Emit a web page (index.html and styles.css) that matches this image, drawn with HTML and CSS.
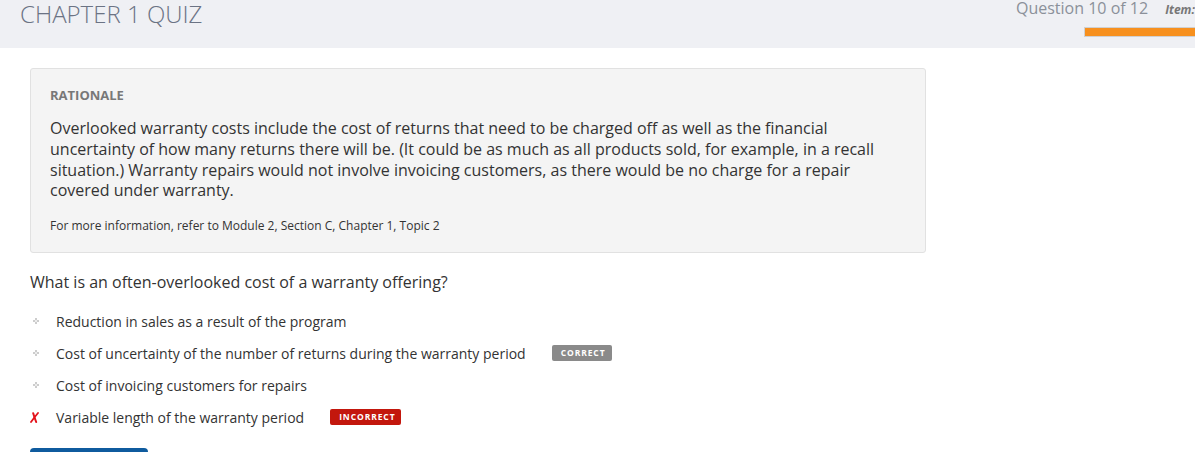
FILE: index.html
```html
<!DOCTYPE html>
<html>
<head>
<meta charset="utf-8">
<link rel="stylesheet" href="styles.css">
</head>
<body>
<header class="topbar">
  <h1 class="title">CHAPTER 1 QUIZ</h1>
  <div class="progress">
    <div class="progress-text"><span class="qnum">Question 10 of 12</span><span class="item">Item: 10</span></div>
    <div class="progress-bar"><div class="progress-fill"></div></div>
  </div>
</header>
<main class="content">
  <section class="rationale">
    <div class="rationale-label">RATIONALE</div>
    <p class="rationale-text">Overlooked warranty costs include the cost of returns that need to be charged off as well as the financial uncertainty of how many returns there will be. (It could be as much as all products sold, for example, in a recall situation.) Warranty repairs would not involve invoicing customers, as there would be no charge for a repair covered under warranty.</p>
    <p class="rationale-ref">For more information, refer to Module 2, Section C, Chapter 1, Topic 2</p>
  </section>
  <h2 class="question">What is an often-overlooked cost of a warranty offering?</h2>
  <ul class="options">
    <li class="option">
      <span class="marker"><svg width="6" height="6" viewBox="0 0 6 6"><path d="M2 0 H4 V2 H6 V4 H4 V6 H2 V4 H0 V2 H2 Z" fill="#cdcdcd"/><rect x="2" y="2" width="2" height="2" fill="#ececec"/></svg></span>
      <span class="option-text">Reduction in sales as a result of the program</span>
    </li>
    <li class="option">
      <span class="marker"><svg width="6" height="6" viewBox="0 0 6 6"><path d="M2 0 H4 V2 H6 V4 H4 V6 H2 V4 H0 V2 H2 Z" fill="#cdcdcd"/><rect x="2" y="2" width="2" height="2" fill="#ececec"/></svg></span>
      <span class="option-text">Cost of uncertainty of the number of returns during the warranty period</span>
      <span class="badge badge-correct">CORRECT</span>
    </li>
    <li class="option">
      <span class="marker"><svg width="6" height="6" viewBox="0 0 6 6"><path d="M2 0 H4 V2 H6 V4 H4 V6 H2 V4 H0 V2 H2 Z" fill="#cdcdcd"/><rect x="2" y="2" width="2" height="2" fill="#ececec"/></svg></span>
      <span class="option-text">Cost of invoicing customers for repairs</span>
    </li>
    <li class="option">
      <span class="marker marker-x"><svg width="9" height="11" viewBox="0 0 9 11"><path d="M3.2 1.2 C4 4 5 7 6.2 10" stroke="#e3131b" stroke-width="2" stroke-linecap="round" fill="none"/><path d="M8 1 C5.5 4 3.5 6.5 1 10" stroke="#e3131b" stroke-width="1.8" stroke-linecap="round" fill="none"/></svg></span>
      <span class="option-text">Variable length of the warranty period</span>
      <span class="badge badge-incorrect">INCORRECT</span>
    </li>
  </ul>
  <button class="next-btn" type="button"></button>
</main>
</body>
</html>
```
FILE: styles.css
```css
* { box-sizing: border-box; }
html, body { margin: 0; padding: 0; background: #ffffff; }
body {
  font-family: "Open Sans", "Liberation Sans", sans-serif;
  color: #333;
  width: 1195px;
  height: 452px;
  overflow: hidden;
}
.topbar {
  height: 48px;
  background: #eff0f4;
  display: grid;
  grid-template-columns: 996px 1fr;
  padding-left: 20px;
}
.title {
  margin: 0;
  font-weight: 300;
  font-size: 24px;
  line-height: 30px;
  margin-top: -1px;
  color: #6b7384;
}
.progress { min-width: 0; overflow: hidden; }
.progress-text {
  display: flex;
  align-items: baseline;
  white-space: nowrap;
  line-height: 17px;
}
.qnum { font-size: 16px; color: #8b909a; }
.item {
  font-size: 12px;
  font-weight: 700;
  font-style: italic;
  color: #777;
  margin-left: 17px;
}
.progress-bar {
  margin-top: 9px;
  margin-left: 68px;
  width: 200px;
  height: 10px;
  border: 1px solid #d0d0d0;
  border-right: none;
  background: #f7901e;
}
.progress-fill { height: 100%; background: #f7901e; }
.content { padding: 20px 0 0 30px; }
.rationale {
  width: 896px;
  height: 185px;
  background: #f4f4f4;
  border: 1px solid #e1e1e1;
  border-radius: 3px;
  padding: 17px 20px 19px 19px;
}
.rationale-label {
  font-size: 13px;
  line-height: 18px;
  font-weight: 700;
  color: #787878;
}
.rationale-text {
  margin: 14px 0 0 0;
  font-size: 16px;
  line-height: 20.8px;
  color: #333;
}
.rationale-ref {
  margin: 17px 0 0 0;
  font-size: 12px;
  line-height: 16px;
  color: #333;
}
.question {
  margin: 18px 0 0 0;
  font-size: 16px;
  font-weight: 400;
  line-height: 22px;
  color: #333;
}
.options {
  list-style: none;
  margin: 12px 0 0 0;
  padding: 0;
}
.option {
  display: flex;
  align-items: center;
  height: 32px;
  font-size: 14px;
  color: #333;
}
.marker {
  width: 26px;
  display: flex;
  align-items: center;
  padding-left: 3px;
}
.marker-x { padding-left: 0; }
.marker svg { display: block; }
.badge {
  margin-left: 26px;
  height: 16px;
  border-radius: 2px;
  color: #fff;
  font-size: 8.5px;
  font-weight: 700;
  letter-spacing: 0.9px;
  line-height: 16px;
  padding: 0 9px;
}
.badge-correct { background: #8a8a8a; width: 60px; }
.badge-incorrect { background: #c3170d; width: 71px; }
.next-btn {
  display: block;
  margin-top: 15px;
  width: 118px;
  height: 30px;
  border: none;
  border-radius: 4px;
  background: #0f5b9e;
}
```
